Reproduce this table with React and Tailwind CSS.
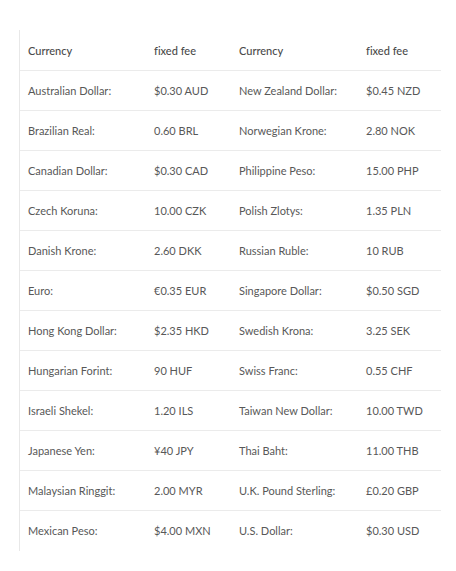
const rows = [
  ['Australian Dollar:', '$0.30 AUD', 'New Zealand Dollar:', '$0.45 NZD'],
  ['Brazilian Real:', '0.60 BRL', 'Norwegian Krone:', '2.80 NOK'],
  ['Canadian Dollar:', '$0.30 CAD', 'Philippine Peso:', '15.00 PHP'],
  ['Czech Koruna:', '10.00 CZK', 'Polish Zlotys:', '1.35 PLN'],
  ['Danish Krone:', '2.60 DKK', 'Russian Ruble:', '10 RUB'],
  ['Euro:', '€0.35 EUR', 'Singapore Dollar:', '$0.50 SGD'],
  ['Hong Kong Dollar:', '$2.35 HKD', 'Swedish Krona:', '3.25 SEK'],
  ['Hungarian Forint:', '90 HUF', 'Swiss Franc:', '0.55 CHF'],
  ['Israeli Shekel:', '1.20 ILS', 'Taiwan New Dollar:', '10.00 TWD'],
  ['Japanese Yen:', '¥40 JPY', 'Thai Baht:', '11.00 THB'],
  ['Malaysian Ringgit:', '2.00 MYR', 'U.K. Pound Sterling:', '£0.20 GBP'],
  ['Mexican Peso:', '$4.00 MXN', 'U.S. Dollar:', '$0.30 USD'],
];

const cols = 'grid grid-cols-[126px_85px_127px_84px]';

export default function App() {
  return (
    <div className="min-h-[571px] w-[456px] bg-white pt-[30px] pl-[19px] text-[11px] text-[#585858] [font-variant-ligatures:none] [font-family:Lato,'Open_Sans',sans-serif]">
      <div className="w-[422px] border-l border-[#e8e8e8]">
        <div className={`${cols} h-[41px] items-center border-b border-[#ebebeb] pt-[3px] font-medium text-[#4a4a4a]`}>
          <div className="pl-[8px]">Currency</div>
          <div className="pl-[8px]">fixed fee</div>
          <div className="pl-[8px]">Currency</div>
          <div className="pl-[8px]">fixed fee</div>
        </div>
        {rows.map((r, i) => (
          <div
            key={i}
            className={`${cols} h-[40px] items-center pt-[1px] ${i < rows.length - 1 ? 'border-b border-[#ebebeb]' : ''}`}
          >
            {r.map((c, j) => (
              <div key={j} className="pl-[8px] whitespace-nowrap">{c}</div>
            ))}
          </div>
        ))}
      </div>
    </div>
  );
}
